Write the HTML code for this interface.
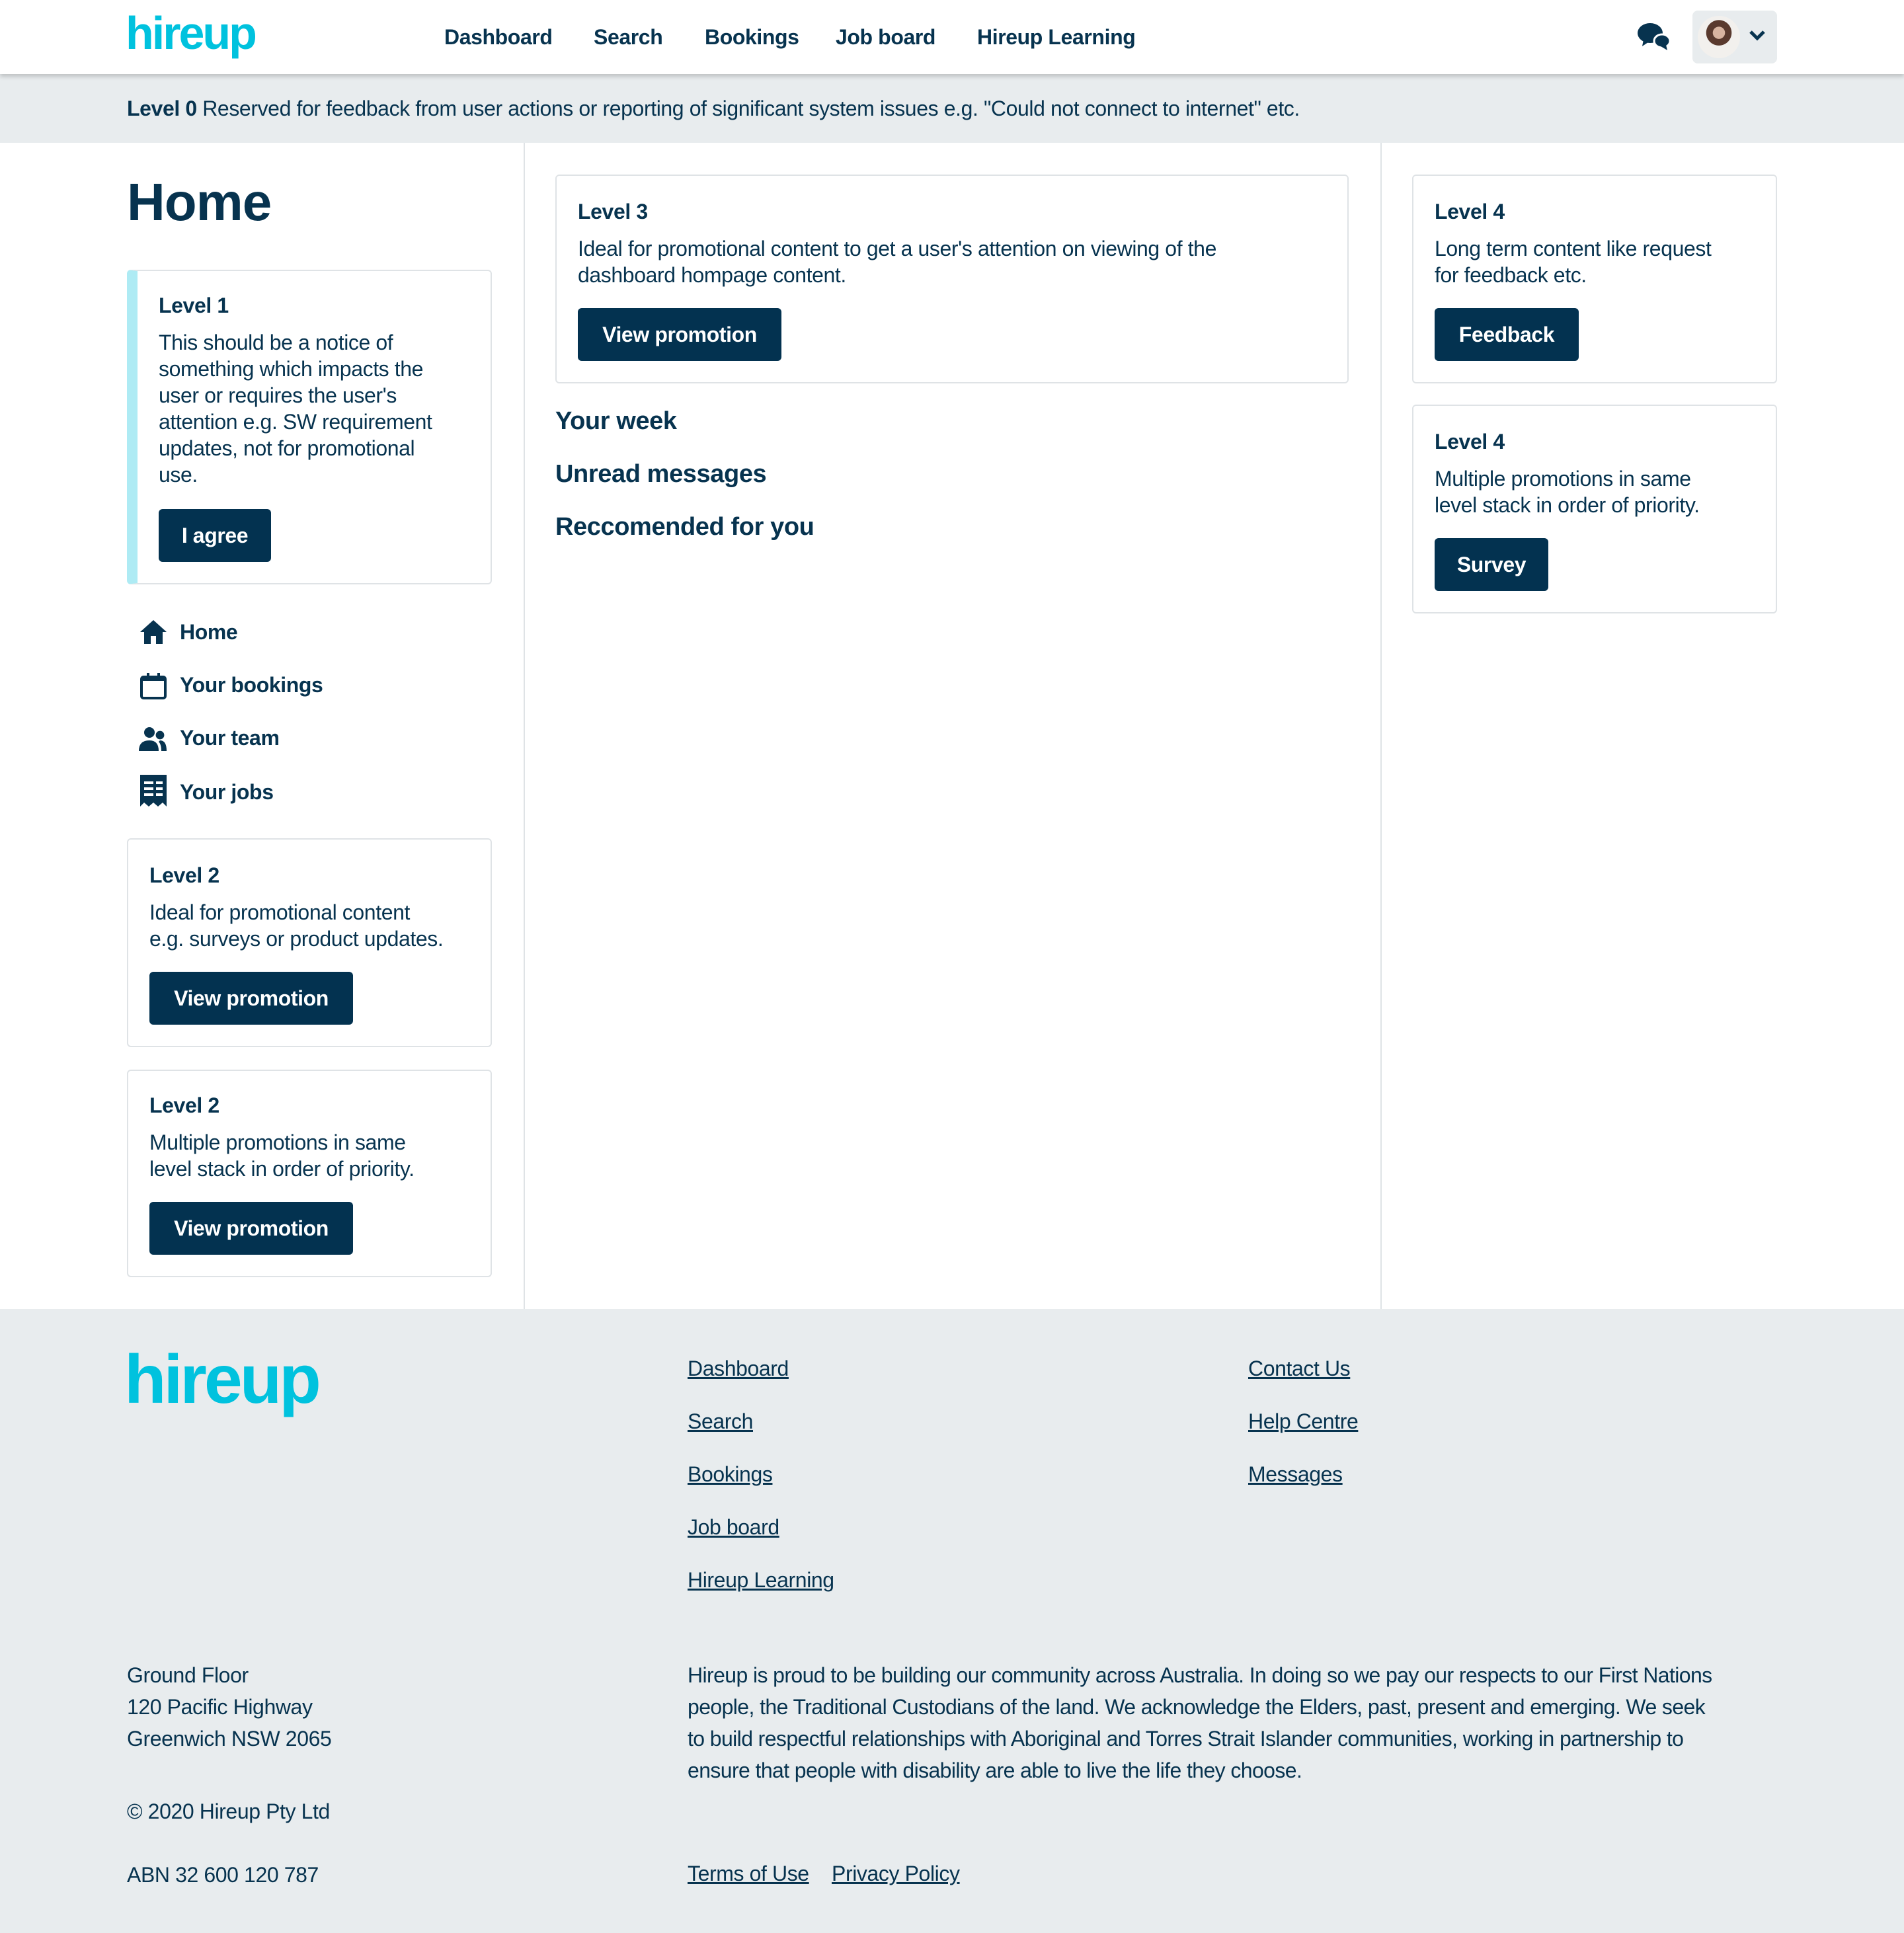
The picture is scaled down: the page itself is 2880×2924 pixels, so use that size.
<!DOCTYPE html>
<html><head><meta charset="utf-8"><style>
*{margin:0;padding:0;box-sizing:border-box}
html,body{width:2880px;height:2924px;overflow:hidden;background:#fff}
#w{zoom:2;width:1440px;height:1462px;position:relative;font-family:"Liberation Sans",sans-serif;color:#07334f;font-size:16px;letter-spacing:-0.2px}
.a{position:absolute}
.hdr{left:0;top:0;width:1440px;height:56px;background:#fff;box-shadow:0 2px 3px rgba(0,0,0,.18);z-index:2}
.logo{font-weight:bold;color:#00c2de;letter-spacing:-1.5px}
.nav{top:19px;font-size:16px;font-weight:bold}
.ban{left:0;top:56px;width:1440px;height:52px;background:#e8ecee}
.card{border:1px solid #dfe3e6;border-radius:3px;background:#fff}
.t{font-weight:bold;font-size:16px}
.p{font-size:16px;line-height:20px;white-space:nowrap}
.btn{background:#033250;color:#fff;border-radius:3px;font-weight:bold;font-size:16px;height:40px;line-height:40px;text-align:center}
.nl{font-weight:bold;font-size:16px}
.h2{font-weight:bold;font-size:19px}
.ft{left:0;top:990px;width:1440px;height:472px;background:#e8ecee}
.fl{text-decoration:underline;font-size:16px}
</style></head><body><div id="w">
<div class="a hdr">
 <div class="a logo" style="left:95px;top:5px;font-size:35px">hireup</div>
 <div class="a nav" style="left:336px">Dashboard</div>
 <div class="a nav" style="left:449px">Search</div>
 <div class="a nav" style="left:533px">Bookings</div>
 <div class="a nav" style="left:632px">Job board</div>
 <div class="a nav" style="left:739px">Hireup Learning</div>
 <svg class="a" style="left:1238px;top:16px" width="26" height="24" viewBox="0 0 26 24"><ellipse cx="10" cy="9" rx="9.5" ry="7.5" fill="#07334f"/><path d="M5 14 L4 19 L10 15Z" fill="#07334f"/><ellipse cx="19" cy="15" rx="6" ry="5" fill="#07334f" stroke="#fff" stroke-width="1.5"/><path d="M18 19 L23 22 L22 18Z" fill="#07334f"/></svg>
 <div class="a" style="left:1280px;top:8px;width:64px;height:40px;background:#e8ecee;border-radius:4px"></div>
 <div class="a" style="left:1284px;top:12px;width:32px;height:32px;border-radius:50%;background:radial-gradient(circle at 50% 40%,#d8b4a0 0 18%,#5a3a2e 19% 38%,#f2f0ed 39%)"></div>
 <svg class="a" style="left:1322px;top:22px" width="14" height="10" viewBox="0 0 14 10"><path d="M2 2 L7 7 L12 2" fill="none" stroke="#07334f" stroke-width="2.5"/></svg>
</div>
<div class="a ban"><div class="a" style="left:96px;top:17px;font-size:16px"><b>Level 0</b> Reserved for feedback from user actions or reporting of significant system issues e.g. "Could not connect to internet" etc.</div></div>
<div class="a" style="left:396px;top:108px;width:1px;height:882px;background:#dfe3e6"></div>
<div class="a" style="left:1044px;top:108px;width:1px;height:882px;background:#dfe3e6"></div>

<div class="a" style="left:96px;top:130px;font-size:40px;font-weight:bold;letter-spacing:-0.5px">Home</div>
<div class="a card" style="left:96px;top:204px;width:276px;height:238px;border-left:8px solid #aeebf4">
 <div class="a t" style="left:16px;top:17px">Level 1</div>
 <div class="a p" style="left:16px;top:44px">This should be a notice of<br>something which impacts the<br>user or requires the user's<br>attention e.g. SW requirement<br>updates, not for promotional<br>use.</div>
 <div class="a btn" style="left:16px;top:180px;width:85px">I agree</div>
</div>
<svg class="a" style="left:105px;top:468px" width="22" height="20" viewBox="0 0 22 20"><path d="M11 1 L21 10 L18 10 L18 19 L13 19 L13 13 L9 13 L9 19 L4 19 L4 10 L1 10Z" fill="#07334f"/></svg>
<div class="a nl" style="left:136px;top:469px">Home</div>
<svg class="a" style="left:105px;top:508px" width="22" height="22" viewBox="0 0 22 22"><rect x="2" y="4" width="18" height="16" rx="1.5" fill="none" stroke="#07334f" stroke-width="2"/><rect x="2" y="4" width="18" height="3" fill="#07334f"/><rect x="6" y="1" width="2" height="4" fill="#07334f"/><rect x="14" y="1" width="2" height="4" fill="#07334f"/></svg>
<div class="a nl" style="left:136px;top:509px">Your bookings</div>
<svg class="a" style="left:105px;top:549px" width="22" height="20" viewBox="0 0 22 20"><circle cx="8" cy="5" r="4" fill="#07334f"/><circle cx="16" cy="7" r="3.2" fill="#07334f"/><path d="M0 19 Q0 11 8 11 Q15 11 15 19Z" fill="#07334f"/><path d="M16 11 Q21 11 21 19 L17 19 Q17 14 15 12Z" fill="#07334f"/></svg>
<div class="a nl" style="left:136px;top:549px">Your team</div>
<svg class="a" style="left:106px;top:586px" width="20" height="25" viewBox="0 0 20 25"><path d="M0 0 H20 V24 L17 21 L13.5 24 L10 21 L6.5 24 L3 21 L0 24Z" fill="#07334f"/><rect x="3" y="5" width="7" height="2" fill="#fff"/><rect x="12" y="5" width="5" height="2" fill="#fff"/><rect x="3" y="9.5" width="7" height="2" fill="#fff"/><rect x="12" y="9.5" width="5" height="2" fill="#fff"/><rect x="3" y="14" width="7" height="2" fill="#fff"/><rect x="12" y="14" width="5" height="2" fill="#fff"/></svg>
<div class="a nl" style="left:136px;top:590px">Your jobs</div>

<div class="a card" style="left:96px;top:634px;width:276px;height:158px">
 <div class="a t" style="left:16px;top:18px">Level 2</div>
 <div class="a p" style="left:16px;top:45px">Ideal for promotional content<br>e.g. surveys or product updates.</div>
 <div class="a btn" style="left:16px;top:100px;width:154px">View promotion</div>
</div>
<div class="a card" style="left:96px;top:809px;width:276px;height:157px">
 <div class="a t" style="left:16px;top:17px">Level 2</div>
 <div class="a p" style="left:16px;top:44px">Multiple promotions in same<br>level stack in order of priority.</div>
 <div class="a btn" style="left:16px;top:99px;width:154px">View promotion</div>
</div>

<div class="a card" style="left:420px;top:132px;width:600px;height:158px">
 <div class="a t" style="left:16px;top:18px">Level 3</div>
 <div class="a p" style="left:16px;top:45px">Ideal for promotional content to get a user's attention on viewing of the<br>dashboard hompage content.</div>
 <div class="a btn" style="left:16px;top:100px;width:154px">View promotion</div>
</div>
<div class="a h2" style="left:420px;top:308px">Your week</div>
<div class="a h2" style="left:420px;top:348px">Unread messages</div>
<div class="a h2" style="left:420px;top:388px">Reccomended for you</div>

<div class="a card" style="left:1068px;top:132px;width:276px;height:158px">
 <div class="a t" style="left:16px;top:18px">Level 4</div>
 <div class="a p" style="left:16px;top:45px">Long term content like request<br>for feedback etc.</div>
 <div class="a btn" style="left:16px;top:100px;width:109px">Feedback</div>
</div>
<div class="a card" style="left:1068px;top:306px;width:276px;height:158px">
 <div class="a t" style="left:16px;top:18px">Level 4</div>
 <div class="a p" style="left:16px;top:45px">Multiple promotions in same<br>level stack in order of priority.</div>
 <div class="a btn" style="left:16px;top:100px;width:86px">Survey</div>
</div>

<div class="a ft">
 <div class="a logo" style="left:94px;top:24px;font-size:52px;letter-spacing:-2px">hireup</div>
 <div class="a fl" style="left:520px;top:36px">Dashboard</div>
 <div class="a fl" style="left:520px;top:76px">Search</div>
 <div class="a fl" style="left:520px;top:116px">Bookings</div>
 <div class="a fl" style="left:520px;top:156px">Job board</div>
 <div class="a fl" style="left:520px;top:196px">Hireup Learning</div>
 <div class="a fl" style="left:944px;top:36px">Contact Us</div>
 <div class="a fl" style="left:944px;top:76px">Help Centre</div>
 <div class="a fl" style="left:944px;top:116px">Messages</div>
 <div class="a p" style="left:96px;top:265px;line-height:24px">Ground Floor<br>120 Pacific Highway<br>Greenwich NSW 2065</div>
 <div class="a p" style="left:96px;top:370px">© 2020 Hireup Pty Ltd</div>
 <div class="a p" style="left:96px;top:418px">ABN 32 600 120 787</div>
 <div class="a p" style="left:520px;top:265px;line-height:24px;letter-spacing:-0.3px">Hireup is proud to be building our community across Australia. In doing so we pay our respects to our First Nations<br>people, the Traditional Custodians of the land. We acknowledge the Elders, past, present and emerging. We seek<br>to build respectful relationships with Aboriginal and Torres Strait Islander communities, working in partnership to<br>ensure that people with disability are able to live the life they choose.</div>
 <div class="a fl" style="left:520px;top:418px">Terms of Use</div>
 <div class="a fl" style="left:629px;top:418px">Privacy Policy</div>
</div>
</div></body></html>
